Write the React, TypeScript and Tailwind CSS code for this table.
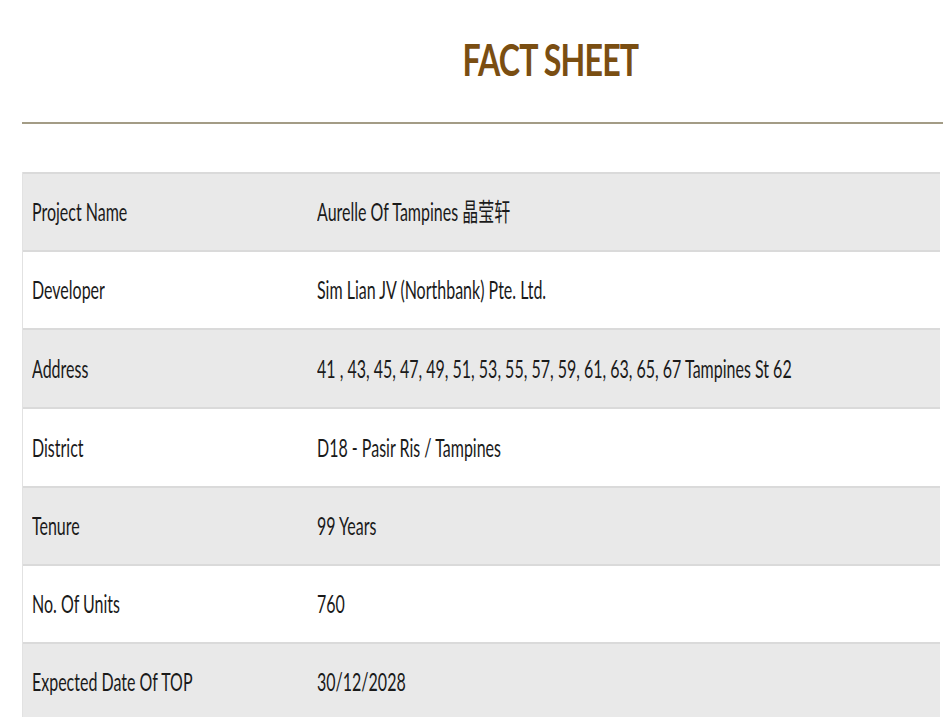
import React from 'react'

const rows: { label: string; value: string; h: string }[] = [
  { label: 'Project Name', value: 'Aurelle Of Tampines 晶莹轩', h: 'h-[78px]' },
  { label: 'Developer', value: 'Sim Lian JV (Northbank) Pte. Ltd.', h: 'h-[78px]' },
  {
    label: 'Address',
    value: '41 , 43, 45, 47, 49, 51, 53, 55, 57, 59, 61, 63, 65, 67 Tampines St 62',
    h: 'h-[79px]',
  },
  { label: 'District', value: 'D18 - Pasir Ris / Tampines', h: 'h-[79px]' },
  { label: 'Tenure', value: '99 Years', h: 'h-[78px]' },
  { label: 'No. Of Units', value: '760', h: 'h-[78px]' },
  { label: 'Expected Date Of TOP', value: '30/12/2028', h: 'h-[78px]' },
]

export default function App() {
  return (
    <div
      className="h-[717px] w-[943px] overflow-hidden bg-white text-[#1a1a1a]"
      style={{ fontFamily: 'Lato, "Noto Sans CJK SC", sans-serif' }}
    >
      <div className="pl-[22px]">
        <div className="flex h-[122px] w-[1056px] items-center justify-center pb-[4px]">
          <span className="inline-block origin-center scale-x-[0.73] text-[44px] font-bold tracking-tight text-[#7a4e12]">
            FACT SHEET
          </span>
        </div>
        <div className="h-[2px] w-[921px] bg-[#a39c86]" />
        <div className="h-[48px]" />
        <div className="w-[918px] border-l border-[#e2e2e2]">
          {rows.map((r, i) => (
            <div
              key={r.label}
              className={`flex items-center border-t-2 border-[#dadada] ${r.h} ${
                i % 2 === 0 ? 'bg-[#e9e9e9]' : 'bg-white'
              }`}
            >
              <div className="w-[294px] shrink-0 pl-[9px]">
                <span className="inline-block origin-left scale-x-[0.64] whitespace-nowrap text-[25px]">
                  {r.label}
                </span>
              </div>
              <div className="flex-1">
                <span className="inline-block origin-left scale-x-[0.64] whitespace-nowrap text-[25px]">
                  {r.value}
                </span>
              </div>
            </div>
          ))}
        </div>
      </div>
    </div>
  )
}
